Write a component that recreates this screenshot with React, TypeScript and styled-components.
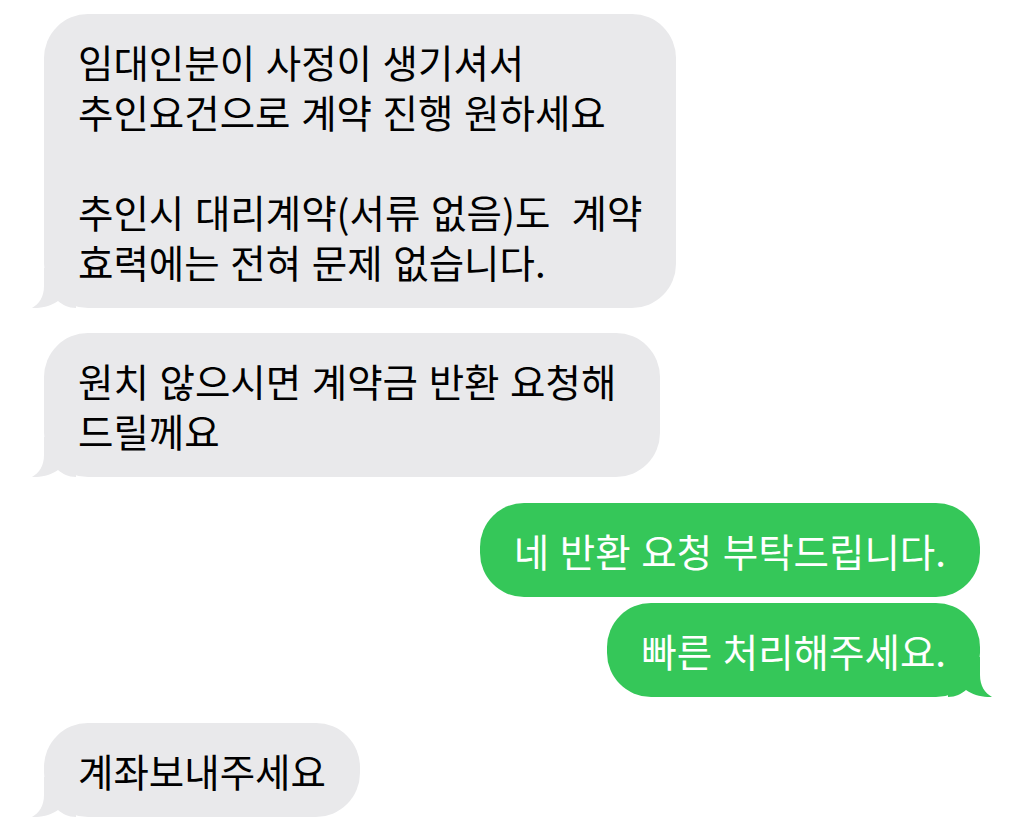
import React from "react";
import styled, { createGlobalStyle } from "styled-components";

const GlobalStyle = createGlobalStyle`
  html, body {
    margin: 0;
    padding: 0;
    background: #ffffff;
  }
  body {
    font-family: "Noto Sans CJK KR", "Noto Sans", sans-serif;
  }
`;

const Thread = styled.div`
  display: flex;
  flex-direction: column;
  padding: 14px 45px 0 44px;
`;

const Row = styled.div<{ $mine?: boolean; $gap: number }>`
  display: flex;
  justify-content: ${(p) => (p.$mine ? "flex-end" : "flex-start")};
  margin-top: ${(p) => p.$gap}px;
`;

const Bubble = styled.div<{ $mine?: boolean; $padRight: number }>`
  position: relative;
  box-sizing: border-box;
  padding: 22px ${(p) => p.$padRight}px 22px 34px;
  border-radius: 44px;
  background: ${(p) => (p.$mine ? "#35c759" : "#e9e9eb")};
  color: ${(p) => (p.$mine ? "#ffffff" : "#000000")};
  font-size: 38.5px;
  line-height: 50px;
  word-spacing: 2px;
  white-space: nowrap;
`;

const Tail = styled.svg<{ $mine?: boolean }>`
  position: absolute;
  bottom: 0;
  width: 45px;
  height: 40px;
  ${(p) => (p.$mine ? "right: -13px; transform: scaleX(-1);" : "left: -13px;")}
`;

const TailShape = ({ mine }: { mine?: boolean }) => (
  <Tail $mine={mine} viewBox="0 0 45 40">
    <path
      d="M13,0 L13,18 C13,29 8,36 1,40 C10,40.5 20,38 27,33 C32,37 37,40 45,40 L45,0 Z"
      fill={mine ? "#35c759" : "#e9e9eb"}
    />
  </Tail>
);

const Text = styled.span`
  position: relative;
`;

type Msg = {
  lines: string[];
  mine?: boolean;
  tail?: boolean;
  gap: number;
  padRight?: number;
};

const messages: Msg[] = [
  {
    lines: [
      "임대인분이 사정이 생기셔서",
      "추인요건으로 계약 진행 원하세요",
      "",
      "추인시 대리계약(서류 없음)도\u00a0 계약",
      "효력에는 전혀 문제 없습니다.",
    ],
    tail: true,
    gap: 0,
  },
  {
    lines: ["원치 않으시면 계약금 반환 요청해", "드릴께요"],
    tail: true,
    gap: 25,
    padRight: 44,
  },
  { lines: ["네 반환 요청 부탁드립니다."], mine: true, gap: 26 },
  { lines: ["빠른 처리해주세요."], mine: true, tail: true, gap: 6 },
  { lines: ["계좌보내주세요"], tail: true, gap: 26 },
];

export default function App() {
  return (
    <>
      <GlobalStyle />
      <Thread>
        {messages.map((m, i) => (
          <Row key={i} $mine={m.mine} $gap={m.gap}>
            <Bubble $mine={m.mine} $padRight={m.padRight ?? 34}>
              {m.tail && <TailShape mine={m.mine} />}
              <Text>
                {m.lines.map((l, j) => (
                  <React.Fragment key={j}>
                    {j > 0 && <br />}
                    {l}
                  </React.Fragment>
                ))}
              </Text>
            </Bubble>
          </Row>
        ))}
      </Thread>
    </>
  );
}
